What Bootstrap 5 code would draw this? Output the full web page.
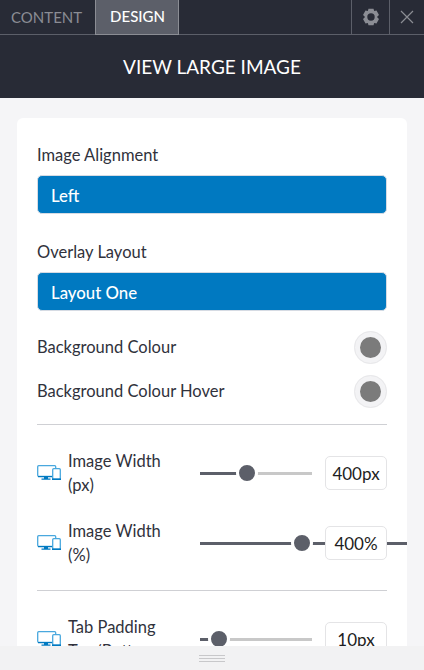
<!DOCTYPE html>
<html lang="en">
<head>
<meta charset="utf-8">
<title>View Large Image</title>
<link href="https://cdn.jsdelivr.net/npm/bootstrap@5.3.0/dist/css/bootstrap.min.css" rel="stylesheet">
<style>
html,body{height:670px;overflow:hidden;margin:0}
body{font-family:"Lato","Liberation Sans",sans-serif;background:#f5f5f7;color:#30323c;font-size:16.5px;width:424px}
.shell{height:670px;display:flex;flex-direction:column}
.topbar{background:#282b36;height:35px;border-bottom:1px solid #5c5f69;flex:none}
.tabbtn{font-size:15px;line-height:34px;height:34px;color:#8b8d94;padding:0 13px 0 11px;text-decoration:none}
.tabbtn.on{color:#fff;background:#5c5f69;border:1px solid #8b8d94;border-top:0;padding:0 14px;font-weight:500;line-height:33px;height:35px;width:84px;text-align:center}
.toolbtn{width:38px;height:34px;border-left:1px solid #5c5f69;display:flex;align-items:center;justify-content:center}
.toolbtn.last{width:35px}
.titlebar{background:#282b36;color:#fff;height:63px;flex:none;font-size:19px;line-height:63px;text-align:center}
.scroller{flex:1 1 auto;min-height:0;overflow:hidden;padding:20px 17px 0}
.sheet{background:#fff;border-radius:6px 6px 0 0;padding:26px 20px 0;height:600px;overflow:hidden}
.fieldlabel{line-height:22px;margin-bottom:9px}
.pickbox{background:#0079c1;color:#fff;height:39px;line-height:39px;padding-left:13px;border:1px solid #d6dbe3;border-radius:5px;font-size:16.8px;font-weight:500;margin-bottom:27px}
.colourrow{height:44px}
.swatch{width:33px;height:33px;border-radius:50%;background:#7b7b7b;border:6px solid #f3f3f5;outline:1px solid #e8e8ea;outline-offset:-1px}
.rule{height:1px;background:#cfd0d4;margin:0}
.ruletop{margin-top:11px}
.sliderrow{height:34px;margin-top:31px}
.sliderrow.next{margin-top:36px}
.devicon{width:24px;height:16px;flex:none}
.slabel{width:101px;padding-left:7px;flex:none;line-height:23.5px;padding-top:1px}
.trackbox{width:112px;flex:none;margin-left:38px;height:3px;position:relative;margin-right:13px;background:#c8c8c8}
.trackbox.over{background:#5c5f69}
.fillpart{height:3px;background:#5c5f69}
.overpart{position:absolute;left:112px;top:0;width:102px;height:3px;background:#5c5f69}
.knob{position:absolute;top:-10px;width:22px;height:22px;border-radius:50%;background:#5c5f69;border:3px solid #fff}
.valbox{width:62px;height:34px;background:#fff;border:1px solid #e4e4e6;border-radius:5px;line-height:33px;text-align:center;font-size:17px;color:#1d1d22;position:relative;flex:none}
.sep{margin-top:30px}
.colfirst{margin-top:14px}
.footbar{position:absolute;left:0;right:0;top:646px;height:24px;background:#f2f2f3;display:flex;align-items:center;justify-content:center}
.grip{width:26px;height:7px;border-top:1px solid #c8c8ca;border-bottom:1px solid #c8c8ca;position:relative}
.grip::after{content:"";position:absolute;left:0;right:0;top:2px;height:1px;background:#c8c8ca}
</style>
</head>
<body>
<div class="shell">
  <div class="topbar d-flex align-items-start">
    <a class="tabbtn" href="#">CONTENT</a>
    <a class="tabbtn on" href="#">DESIGN</a>
    <div class="ms-auto d-flex">
      <div class="toolbtn">
        <svg width="18" height="18" viewBox="0 0 18 18"><path fill="#8b8d94" fill-rule="evenodd" d="M6.500.8h5l.7 2.300 2.300-.5 2.500 4.300-1.700 1.700.1.400-.1.400 1.700 1.700-2.500 4.300-2.300-.5-.7 2.300h-5l-.7-2.300-2.300.5L1 11.100l1.700-1.700-.1-.4.1-.4L1 6.900l2.500-4.300 2.300.5zM9 5.300a3.700 3.700 0 1 0 0 7.400 3.700 3.700 0 0 0 0-7.400z"/></svg>
      </div>
      <div class="toolbtn last">
        <svg width="14" height="14" viewBox="0 0 14 14"><path stroke="#8b8d94" stroke-width="1.200" d="M1 1l12 12M13 1L1 13"/></svg>
      </div>
    </div>
  </div>
  <div class="titlebar">VIEW LARGE IMAGE</div>
  <div class="scroller">
    <div class="sheet">
      <div class="fieldlabel">Image Alignment</div>
      <div class="pickbox">Left</div>
      <div class="fieldlabel">Overlay Layout</div>
      <div class="pickbox mb-0">Layout One</div>
      <div class="colourrow colfirst d-flex justify-content-between align-items-center"><span>Background Colour</span><span class="swatch"></span></div>
      <div class="colourrow d-flex justify-content-between align-items-center"><span>Background Colour Hover</span><span class="swatch"></span></div>
      <div class="rule ruletop"></div>
      <div class="sliderrow d-flex align-items-center">
        <svg class="devicon" viewBox="0 0 24 16"><rect x=".7" y=".7" width="18" height="10.600" rx="1" fill="#fff" stroke="#49a8de" stroke-width="1.300"/><path fill="#0079c1" d="M1 11h15v1.200H1zM7 12h4v1.600h2.500v1.200h-9v-1.200H7z"/><rect x="15.700" y="3.700" width="7.600" height="10.600" rx="1" fill="#fff" stroke="#49a8de" stroke-width="1.300"/><path fill="#0079c1" d="M15 13.400h9V15h-9z"/></svg>
        <div class="slabel">Image Width (px)</div>
        <div class="trackbox"><div class="fillpart" style="width:47px"></div><span class="knob" style="left:36px"></span></div>
        <div class="valbox">400px</div>
      </div>
      <div class="sliderrow next d-flex align-items-center">
        <svg class="devicon" viewBox="0 0 24 16"><rect x=".7" y=".7" width="18" height="10.600" rx="1" fill="#fff" stroke="#49a8de" stroke-width="1.300"/><path fill="#0079c1" d="M1 11h15v1.200H1zM7 12h4v1.600h2.500v1.200h-9v-1.200H7z"/><rect x="15.700" y="3.700" width="7.600" height="10.600" rx="1" fill="#fff" stroke="#49a8de" stroke-width="1.300"/><path fill="#0079c1" d="M15 13.400h9V15h-9z"/></svg>
        <div class="slabel">Image Width (%)</div>
        <div class="trackbox over"><span class="overpart"></span><span class="knob" style="left:91px"></span></div>
        <div class="valbox">400%</div>
      </div>
      <div class="rule sep"></div>
      <div class="sliderrow d-flex align-items-center">
        <svg class="devicon" viewBox="0 0 24 16"><rect x=".7" y=".7" width="18" height="10.600" rx="1" fill="#fff" stroke="#49a8de" stroke-width="1.300"/><path fill="#0079c1" d="M1 11h15v1.200H1zM7 12h4v1.600h2.500v1.200h-9v-1.200H7z"/><rect x="15.700" y="3.700" width="7.600" height="10.600" rx="1" fill="#fff" stroke="#49a8de" stroke-width="1.300"/><path fill="#0079c1" d="M15 13.400h9V15h-9z"/></svg>
        <div class="slabel">Tab Padding Top/Bottom</div>
        <div class="trackbox"><div class="fillpart" style="width:19px"></div><span class="knob" style="left:8px"></span></div>
        <div class="valbox">10px</div>
      </div>
    </div>
  </div>
  <div class="footbar"><span class="grip"></span></div>
</div>
<script src="https://cdn.jsdelivr.net/npm/bootstrap@5.3.0/dist/js/bootstrap.bundle.min.js"></script>
</body>
</html>
